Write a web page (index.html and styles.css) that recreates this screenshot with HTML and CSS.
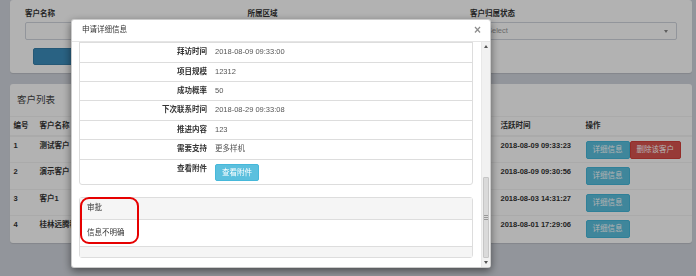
FILE: index.html
```html
<!DOCTYPE html>
<html lang="zh-CN">
<head>
    <meta charset="UTF-8">
    <meta name="viewport" content="width=device-width, initial-scale=1.0">
    <title>客户列表</title>
    <link rel="stylesheet" href="styles.css">
</head>
<body>

<div class="page">
    <!-- 查询条件 -->
    <div class="box filter-box">
        <div class="filter-row">
            <div class="filter-col">
                <label>客户名称</label>
                <div class="input"></div>
                <button class="btn-search">查询</button>
            </div>
            <div class="filter-col">
                <label>所属区域</label>
                <div class="input"></div>
            </div>
            <div class="filter-col">
                <label>客户归属状态</label>
                <div class="input select"><span class="placeholder">Select</span><span class="caret"></span></div>
            </div>
        </div>
    </div>

    <!-- 客户列表 -->
    <div class="box list-box">
        <div class="box-header">客户列表</div>
        <table class="list-table">
            <colgroup>
                <col class="c-id"><col class="c-name"><col><col class="c-time"><col class="c-op">
            </colgroup>
            <thead>
                <tr><th>编号</th><th>客户名称</th><th>所属区域</th><th>活跃时间</th><th>操作</th></tr>
            </thead>
            <tbody>
                <tr>
                    <td>1</td><td>测试客户</td><td>桂林</td><td>2018-08-09 09:33:23</td>
                    <td><span class="btn btn-info">详细信息</span><span class="btn btn-danger">删除该客户</span></td>
                </tr>
                <tr>
                    <td>2</td><td>演示客户</td><td>桂林</td><td>2018-08-09 09:30:56</td>
                    <td><span class="btn btn-info">详细信息</span></td>
                </tr>
                <tr>
                    <td>3</td><td>客户1</td><td>桂林</td><td>2018-08-03 14:31:27</td>
                    <td><span class="btn btn-info">详细信息</span></td>
                </tr>
                <tr>
                    <td>4</td><td>桂林远腾科技有限公司</td><td>桂林</td><td>2018-08-01 17:29:06</td>
                    <td><span class="btn btn-info">详细信息</span></td>
                </tr>
            </tbody>
        </table>
    </div>
</div>

<div class="backdrop"></div>

<!-- 申请详细信息 弹窗 -->
<div class="modal">
    <div class="modal-header">
        <span class="modal-title">申请详细信息</span>
        <span class="close">&times;</span>
    </div>
    <div class="modal-main">
        <div class="modal-body">
            <div class="modal-content">
                <div class="panel">
                    <table class="detail-table">
                        <tr><td>申请时间</td><td>2018-08-09 09:33:00</td></tr>
                        <tr><td>拜访时间</td><td>2018-08-09 09:33:00</td></tr>
                        <tr><td>项目规模</td><td>12312</td></tr>
                        <tr><td>成功概率</td><td>50</td></tr>
                        <tr><td>下次联系时间</td><td>2018-08-29 09:33:08</td></tr>
                        <tr><td>推进内容</td><td>123</td></tr>
                        <tr><td>需要支持</td><td>更多样机</td></tr>
                        <tr class="last"><td>查看附件</td><td><span class="btn btn-info btn-file">查看附件</span></td></tr>
                    </table>
                </div>
                <div class="panel approve">
                    <div class="panel-heading">审批</div>
                    <div class="panel-body">信息不明确</div>
                    <div class="panel-footer"></div>
                    <div class="mark"></div>
                </div>
            </div>
        </div>
        <div class="scrollbar">
            <div class="sb-btn"><span class="arrow-up"></span></div>
            <div class="sb-track"><div class="sb-thumb"></div></div>
            <div class="sb-btn"><span class="arrow-down"></span></div>
        </div>
    </div>
</div>

</body>
</html>
```

FILE: styles.css
```css
body {
    margin: 0;
    height: 276px;
    overflow: hidden;
    background-color: #d2d6de;
    font-family: "Liberation Sans", "Noto Sans CJK SC", sans-serif;
    font-size: 7.5px;
    line-height: 10.7px;
    color: #333;
}
.page {
    padding: 0 4px 0 10px;
}
.box {
    background-color: #fff;
    border-radius: 3px;
    box-shadow: 0 1px 1px rgba(0, 0, 0, 0.1);
}

/* filter box */
.filter-box {
    padding: 9px 7px 8px;
}
.filter-row {
    display: flex;
}
.filter-col {
    width: 222.5px;
    padding: 0 8px;
    box-sizing: border-box;
}
.filter-col label {
    display: block;
    font-weight: bold;
    margin-bottom: 2.3px;
}
.input {
    height: 18px;
    border: 1px solid #d2d6de;
    border-radius: 2px;
    background-color: #fff;
    box-sizing: border-box;
}
.select {
    display: flex;
    align-items: center;
    justify-content: space-between;
    padding: 0 8px 0 16px;
}
.placeholder {
    color: #999;
}
.caret {
    border-top: 3px solid #888;
    border-left: 2.5px solid transparent;
    border-right: 2.5px solid transparent;
}
.btn-search {
    display: block;
    margin: 8px 0 0 8px;
    width: 120px;
    height: 17px;
    background-color: #3c8dbc;
    border: 1px solid #367fa9;
    border-radius: 2px;
    color: #fff;
    font-family: inherit;
    font-size: 7.5px;
}

/* list box */
.list-box {
    margin-top: 11px;
    height: 159px;
}
.box-header {
    height: 32px;
    line-height: 32px;
    padding: 0 7px;
    font-size: 9.5px;
    color: #444;
    border-bottom: 1px solid #f4f4f4;
}
.list-table {
    width: 100%;
    border-collapse: collapse;
    table-layout: fixed;
}
.c-id { width: 26px; }
.c-name { width: 100px; }
.c-time { width: 85px; }
.c-op { width: 110px; }
.list-table th,
.list-table td {
    text-align: left;
    vertical-align: top;
    white-space: nowrap;
    overflow: hidden;
    font-weight: bold;
    color: #333;
}
.list-table th {
    padding: 3.5px 3.5px;
    border-bottom: 2px solid #f4f4f4;
}
.list-table td {
    padding: 4px 3.5px 3.6px;
    border-top: 1px solid #f4f4f4;
    height: 18px;
}
.btn {
    display: inline-block;
    height: 18px;
    line-height: 16px;
    padding: 0 6px;
    border: 1px solid transparent;
    border-radius: 2px;
    box-sizing: border-box;
    color: #fff;
    font-weight: normal;
    font-size: 7.5px;
    vertical-align: top;
}
.btn-info {
    background-color: #5bc0de;
    border-color: #46b8da;
}
.btn-danger {
    background-color: #d9534f;
    border-color: #d43f3a;
}

/* backdrop + modal */
.backdrop {
    position: fixed;
    top: 0;
    left: 0;
    right: 0;
    bottom: 0;
    background-color: rgba(0, 0, 0, 0.3);
}
.modal {
    position: fixed;
    left: 71px;
    top: 19px;
    width: 420px;
    height: 249px;
    box-sizing: border-box;
    background-color: #fff;
    border: 1px solid rgba(0, 0, 0, 0.2);
    border-radius: 3px;
    box-shadow: 0 3px 9px rgba(0, 0, 0, 0.5);
    display: flex;
    flex-direction: column;
}
.modal-header {
    height: 22px;
    flex-shrink: 0;
    box-sizing: border-box;
    padding: 0 9px 0 10px;
    border-bottom: 1px solid #e5e5e5;
    display: flex;
    align-items: center;
    justify-content: space-between;
}
.close {
    font-size: 12px;
    font-weight: bold;
    color: #000;
    opacity: 0.45;
}
.modal-main {
    flex: 1;
    min-height: 0;
    display: flex;
}
.modal-body {
    flex: 1;
    display: flex;
    flex-direction: column;
    justify-content: flex-end; /* show scrolled to bottom */
    overflow: hidden;
}
.modal-content {
    flex-shrink: 0;
    padding: 0 8px 9px 7px;
}
.panel {
    border: 1px solid #ddd;
    border-radius: 3px;
    margin-bottom: 12px;
}
.panel:last-child {
    margin-bottom: 0;
}
.detail-table {
    width: 100%;
    border-collapse: collapse;
}
.detail-table td {
    padding: 4px;
    line-height: 10.4px;
    border-top: 1px solid #ddd;
    vertical-align: top;
    color: #555;
}
.detail-table tr:first-child td {
    border-top: none;
}
.detail-table td:first-child {
    width: 123px;
    text-align: right;
    font-weight: bold;
    color: #333;
}
.detail-table .last td {
    padding-bottom: 3px;
}
.btn-file {
    height: 17.5px;
    line-height: 15.5px;
}
.approve {
    position: relative;
}
.panel-heading {
    background-color: #f5f5f5;
    border-bottom: 1px solid #ddd;
    padding: 5px 7px;
    line-height: 10.4px;
}
.panel-body {
    padding: 8px 7px;
    line-height: 10.4px;
}
.panel-footer {
    height: 10px;
    background-color: #f5f5f5;
    border-top: 1px solid #ddd;
}
.mark {
    position: absolute;
    left: 0;
    top: -1px;
    width: 59px;
    height: 47px;
    box-sizing: border-box;
    border: 2.5px solid #e60000;
    border-radius: 9px;
}

/* fake scrollbar */
.scrollbar {
    width: 9px;
    box-sizing: border-box;
    display: flex;
    flex-direction: column;
    background-color: #f1f1f1;
    border-left: 1px solid #e8e8e8;
}
.sb-btn {
    height: 9px;
    display: flex;
    align-items: center;
    justify-content: center;
}
.arrow-up {
    border-bottom: 3px solid #555;
    border-left: 2px solid transparent;
    border-right: 2px solid transparent;
}
.arrow-down {
    border-top: 3px solid #555;
    border-left: 2px solid transparent;
    border-right: 2px solid transparent;
}
.sb-track {
    flex: 1;
    display: flex;
    flex-direction: column;
    justify-content: flex-end;
}
.sb-thumb {
    height: 79px;
    margin: 0 1px;
    background-color: #dadada;
    border: 1px solid #c6c6c6;
    border-radius: 1px;
    display: flex;
    align-items: center;
    justify-content: center;
}
.sb-thumb::after {
    content: "";
    width: 4px;
    height: 5px;
    background: repeating-linear-gradient(#999 0 1px, transparent 1px 2px);
}
```
